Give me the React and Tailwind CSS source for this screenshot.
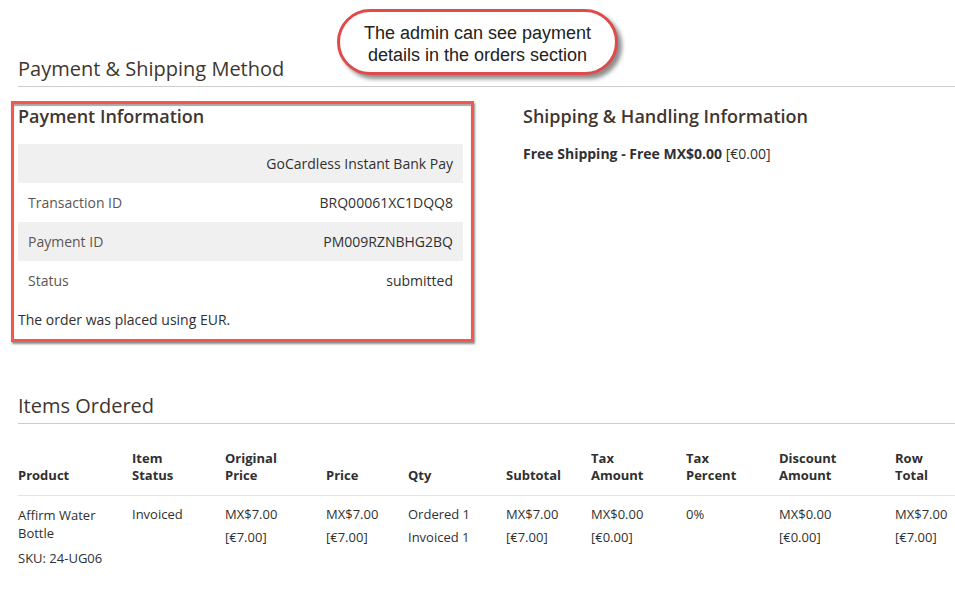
const payRows = [
  { label: '', value: 'GoCardless Instant Bank Pay', shade: true },
  { label: 'Transaction ID', value: 'BRQ00061XC1DQQ8', shade: false },
  { label: 'Payment ID', value: 'PM009RZNBHG2BQ', shade: true },
  { label: 'Status', value: 'submitted', shade: false },
];

const columns = [
  ['', 'Product'],
  ['Item', 'Status'],
  ['Original', 'Price'],
  ['', 'Price'],
  ['', 'Qty'],
  ['', 'Subtotal'],
  ['Tax', 'Amount'],
  ['Tax', 'Percent'],
  ['Discount', 'Amount'],
  ['Row', 'Total'],
];

const cells = [
  ['Affirm Water Bottle', 'SKU: 24-UG06'],
  ['Invoiced'],
  ['MX$7.00', '[€7.00]'],
  ['MX$7.00', '[€7.00]'],
  ['Ordered 1', 'Invoiced 1'],
  ['MX$7.00', '[€7.00]'],
  ['MX$0.00', '[€0.00]'],
  ['0%'],
  ['MX$0.00', '[€0.00]'],
  ['MX$7.00', '[€7.00]'],
];

const gridCols = 'grid grid-cols-[114px_93px_101px_82px_98px_85px_95px_93px_116px_1fr]';

const App = () => {
  return (
    <div className="relative min-h-[614px] bg-white pl-[18px] font-['Open_Sans',sans-serif] text-[#303030]">
      {/* callout annotation */}
      <div className="absolute left-[337px] top-[9px] flex h-[66px] w-[281px] items-center justify-center rounded-full border-[3px] border-[#e04a4a] bg-white pt-[4px] shadow-[4px_4px_4px_rgba(0,0,0,0.45)]">
        <p className="text-center font-['Liberation_Sans',Arial,sans-serif] text-[18px] leading-[22px] text-[#222]">
          The admin can see payment
          <br />
          details in the orders section
        </p>
      </div>

      <h2 className="border-b border-[#cccccc] pt-[57px] pb-[5px] text-[20px] leading-[24px] text-[#41362f]">
        Payment &amp; Shipping Method
      </h2>

      <div className="flex gap-[60px]">
        <div className="relative w-[445px]">
          {/* red highlight annotation */}
          <div className="absolute -left-[7px] -right-[11px] top-[14px] h-[241px] border-[3px] border-[#f5574b] shadow-[1px_2px_2px_rgba(0,0,0,0.45),inset_0_2px_1px_rgba(0,0,0,0.35)]" />
          <h3 className="mt-[18px] text-[18px] font-semibold leading-[22px] text-[#41362f]">Payment Information</h3>
          <div className="mt-[17px] text-[14px]">
            {payRows.map((r, i) => (
              <div
                key={i}
                className={`flex h-[39px] items-center justify-between px-[10px] ${r.shade ? 'bg-[#f0f0f0]' : ''}`}
              >
                <span className="text-[#5c5650]">{r.label}</span>
                <span className="text-[#303030]">{r.value}</span>
              </div>
            ))}
          </div>
          <p className="mt-[10px] text-[14px] leading-[20px] text-[#303030]">The order was placed using EUR.</p>
        </div>

        <div>
          <h3 className="mt-[18px] text-[18px] font-semibold leading-[22px] text-[#41362f]">
            Shipping &amp; Handling Information
          </h3>
          <p className="mt-[17px] text-[14px] leading-[20px] text-[#303030]">
            <span className="font-bold">Free Shipping - Free MX$0.00</span> [€0.00]
          </p>
        </div>
      </div>

      <h2 className="mt-[64px] border-b border-[#cccccc] pb-[5px] text-[20px] leading-[24px] text-[#41362f]">
        Items Ordered
      </h2>

      <div className={`${gridCols} mt-[26px] border-b border-[#e3e3e3] pb-[11px] text-[13px] font-bold leading-[17px] text-[#303030]`}>
        {columns.map((c, i) => (
          <div key={i}>
            <div>{c[0] || '\u00a0'}</div>
            <div>{c[1]}</div>
          </div>
        ))}
      </div>

      <div className={`${gridCols} pt-[7px] text-[13px] leading-[23px] text-[#303030]`}>
        {cells.map((c, i) =>
          i === 0 ? (
            <div key={i}>
              <div className="w-[90px] pt-[3px] leading-[18px]">{c[0]}</div>
              <div className="mt-[5px]">{c[1]}</div>
            </div>
          ) : (
            <div key={i}>
              {c.map((t, j) => (
                <div key={j}>{t}</div>
              ))}
            </div>
          )
        )}
      </div>
    </div>
  );
};

export default App;
